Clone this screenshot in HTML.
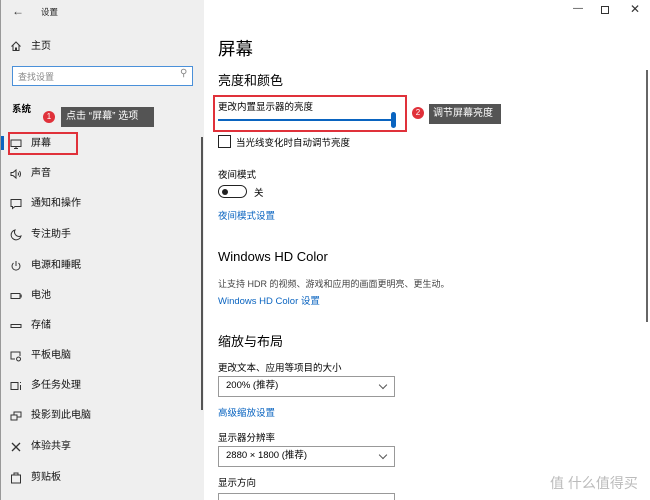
<!DOCTYPE html>
<html style="overflow:hidden;width:650px;height:500px"><head><meta charset="utf-8"><style>
*{margin:0;padding:0;box-sizing:border-box}
body{width:650px;height:500px;overflow:hidden;position:relative;background:#fff;font-family:"Liberation Sans","Noto Sans CJK SC",sans-serif;color:#000}
.a{position:absolute;white-space:nowrap}
#side{position:absolute;left:0;top:0;width:204px;height:500px;background:#efefef;border-left:1px solid #999}
.it{position:absolute;left:30px;font-size:10px;line-height:12px;color:#111}
.ic{position:absolute;left:9px;width:12px;height:12px}
.lk{color:#0a64c0}
.dd{position:absolute;left:218px;width:177px;height:21px;border:1.5px solid #999;font-size:9.5px;line-height:18px;padding-left:7px}
.dd:after{content:"";position:absolute;right:8px;top:5px;width:5px;height:5px;border-right:1px solid #555;border-bottom:1px solid #555;transform:rotate(45deg)}
</style></head><body>
<div id="side">
<div class="a" style="left:11px;top:4px;font-size:12px;color:#333">←</div>
<div class="a" style="left:40px;top:6px;font-size:8.5px;color:#222">设置</div>
<svg class="ic" style="top:40px" viewBox="0 0 12 12"><path d="M1.5 6.5L6 2l4.5 4.5M3 5v5.5h2.5V8h1v2.5H9V5" fill="none" stroke="#333" stroke-width="1"/></svg>
<div class="it" style="top:41px">主页</div>
<div class="a" style="left:11px;top:66px;width:181px;height:20px;background:#fff;border:1.5px solid #4a90d9"></div>
<div class="a" style="left:17px;top:70px;font-size:9px;color:#888">查找设置</div>
<div class="a" style="left:179px;top:68px;font-size:10px;color:#888">⚲</div>
<div class="a" style="left:11px;top:101px;font-size:9.5px;font-weight:bold">系统</div>
<div class="a" style="left:42px;top:111px;width:12px;height:12px;border-radius:6px;background:#e0313a;color:#fff;font-size:8px;line-height:12px;text-align:center">1</div>
<div class="a" style="left:56px;top:113px;width:0;height:0;border:4px solid transparent;border-right-color:#545454"></div>
<div class="a" style="left:60px;top:107px;width:93px;height:20px;background:#545454;color:#fff;font-size:10px;line-height:20px;padding-left:5px">点击 “屏幕” 选项</div>
<div class="a" style="left:0;top:136px;width:3px;height:14px;background:#0a64c0"></div>
<div class="a" style="left:7px;top:132px;width:70px;height:23px;border:2px solid #e0313a"></div>
<svg class="ic" style="top:138px" viewBox="0 0 12 12"><path d="M1 2h10v6.5H1zM4 10.5h4M6 8.5v2" fill="none" stroke="#333"/></svg>
<div class="it" style="top:138px">屏幕</div>
<svg class="ic" style="top:168px" viewBox="0 0 12 12"><path d="M1 4.5h2l3-2.5v8l-3-2.5H1zM8 4.5q1 1.5 0 3M9.5 3q2 3 0 6" fill="none" stroke="#333"/></svg>
<div class="it" style="top:168px">声音</div>
<svg class="ic" style="top:198px" viewBox="0 0 12 12"><path d="M1 1.5h10v7H5l-2.5 2v-2H1z" fill="none" stroke="#333"/></svg>
<div class="it" style="top:198px">通知和操作</div>
<svg class="ic" style="top:229px" viewBox="0 0 12 12"><path d="M5 1a5 5 0 1 0 6 6A4.5 4.5 0 0 1 5 1z" fill="none" stroke="#333"/></svg>
<div class="it" style="top:229px">专注助手</div>
<svg class="ic" style="top:260px" viewBox="0 0 12 12"><path d="M6 1v5M3.5 3a4 4 0 1 0 5 0" fill="none" stroke="#333"/></svg>
<div class="it" style="top:260px">电源和睡眠</div>
<svg class="ic" style="top:290px" viewBox="0 0 12 12"><path d="M1 3.5h9v5H1zM10 5h1.2v2H10" fill="none" stroke="#333"/></svg>
<div class="it" style="top:290px">电池</div>
<svg class="ic" style="top:320px" viewBox="0 0 12 12"><path d="M1 4.5h10v3H1z" fill="none" stroke="#333"/></svg>
<div class="it" style="top:320px">存储</div>
<svg class="ic" style="top:350px" viewBox="0 0 12 12"><path d="M5 9H1V2h9v4M8.5 7a2 2 0 1 0 .1 0z" fill="none" stroke="#333"/></svg>
<div class="it" style="top:350px">平板电脑</div>
<svg class="ic" style="top:380px" viewBox="0 0 12 12"><path d="M1 2v8M8 2v8M1 2.5h7M1 9.5h7M10.5 2v1M10.5 5v5" fill="none" stroke="#333"/></svg>
<div class="it" style="top:380px">多任务处理</div>
<svg class="ic" style="top:410px" viewBox="0 0 12 12"><path d="M1 5h6v5H1zM4 5V2h7v5H7" fill="none" stroke="#333"/></svg>
<div class="it" style="top:410px">投影到此电脑</div>
<svg class="ic" style="top:441px" viewBox="0 0 12 12"><path d="M2 2l8 8M10 2l-8 8" fill="none" stroke="#333" stroke-width="1.3"/></svg>
<div class="it" style="top:441px">体验共享</div>
<svg class="ic" style="top:472px" viewBox="0 0 12 12"><path d="M1.5 3h9v8h-9zM4 3V1h4v2" fill="none" stroke="#333"/></svg>
<div class="it" style="top:472px">剪贴板</div>
<div class="a" style="left:200px;top:137px;width:2px;height:273px;background:#555"></div>
</div>
<div class="a" style="left:573px;top:3px;font-size:10px;color:#333">—</div>
<div class="a" style="left:601px;top:6px;width:8px;height:8px;border:1px solid #333"></div>
<div class="a" style="left:630px;top:2px;font-size:12px;color:#333">✕</div>
<div class="a" style="left:646px;top:70px;width:2px;height:252px;background:#666"></div>
<div class="a" style="left:218px;top:36px;font-size:17.5px">屏幕</div>
<div class="a" style="left:218px;top:70px;font-size:13px">亮度和颜色</div>
<div class="a" style="left:213px;top:95px;width:194px;height:37px;border:2px solid #e0313a"></div>
<div class="a" style="left:218px;top:99px;font-size:9.5px">更改内置显示器的亮度</div>
<div class="a" style="left:218px;top:119px;width:176px;height:2px;background:#0a64c0"></div>
<div class="a" style="left:391px;top:112px;width:5px;height:16px;border-radius:3px;background:#0a64c0"></div>
<div class="a" style="left:412px;top:107px;width:12px;height:12px;border-radius:6px;background:#e0313a;color:#fff;font-size:8px;line-height:12px;text-align:center">2</div>
<div class="a" style="left:425px;top:110px;width:0;height:0;border:4px solid transparent;border-right-color:#545454"></div>
<div class="a" style="left:429px;top:104px;width:72px;height:20px;background:#545454;color:#fff;font-size:10px;line-height:20px;padding-left:4px">调节屏幕亮度</div>
<div class="a" style="left:218px;top:135px;width:13px;height:13px;border:1.5px solid #222"></div>
<div class="a" style="left:236px;top:135px;font-size:9.5px">当光线变化时自动调节亮度</div>
<div class="a" style="left:218px;top:167px;font-size:9.5px">夜间模式</div>
<div class="a" style="left:218px;top:185px;width:29px;height:13px;border:1.5px solid #222;border-radius:7px"></div>
<div class="a" style="left:222px;top:188.5px;width:6px;height:6px;border-radius:3px;background:#222"></div>
<div class="a" style="left:254px;top:185px;font-size:9.5px">关</div>
<div class="a lk" style="left:218px;top:208px;font-size:9.5px">夜间模式设置</div>
<div class="a" style="left:218px;top:249px;font-size:13px">Windows HD Color</div>
<div class="a" style="left:218px;top:277px;font-size:9px;color:#444">让支持 HDR 的视频、游戏和应用的画面更明亮、更生动。</div>
<div class="a lk" style="left:218px;top:293px;font-size:9.5px">Windows HD Color 设置</div>
<div class="a" style="left:218px;top:331px;font-size:13px">缩放与布局</div>
<div class="a" style="left:218px;top:360px;font-size:9.5px">更改文本、应用等项目的大小</div>
<div class="dd" style="top:376px">200% (推荐)</div>
<div class="a lk" style="left:218px;top:405px;font-size:9.5px">高级缩放设置</div>
<div class="a" style="left:218px;top:430px;font-size:9.5px">显示器分辨率</div>
<div class="dd" style="top:446px">2880 × 1800 (推荐)</div>
<div class="a" style="left:218px;top:475px;font-size:9.5px">显示方向</div>
<div class="dd" style="top:493px;height:7px;border-bottom:none"></div>
<div class="a" style="left:550px;top:473px;font-size:14px;color:#bbb">值 什么值得买</div>
</body></html>
